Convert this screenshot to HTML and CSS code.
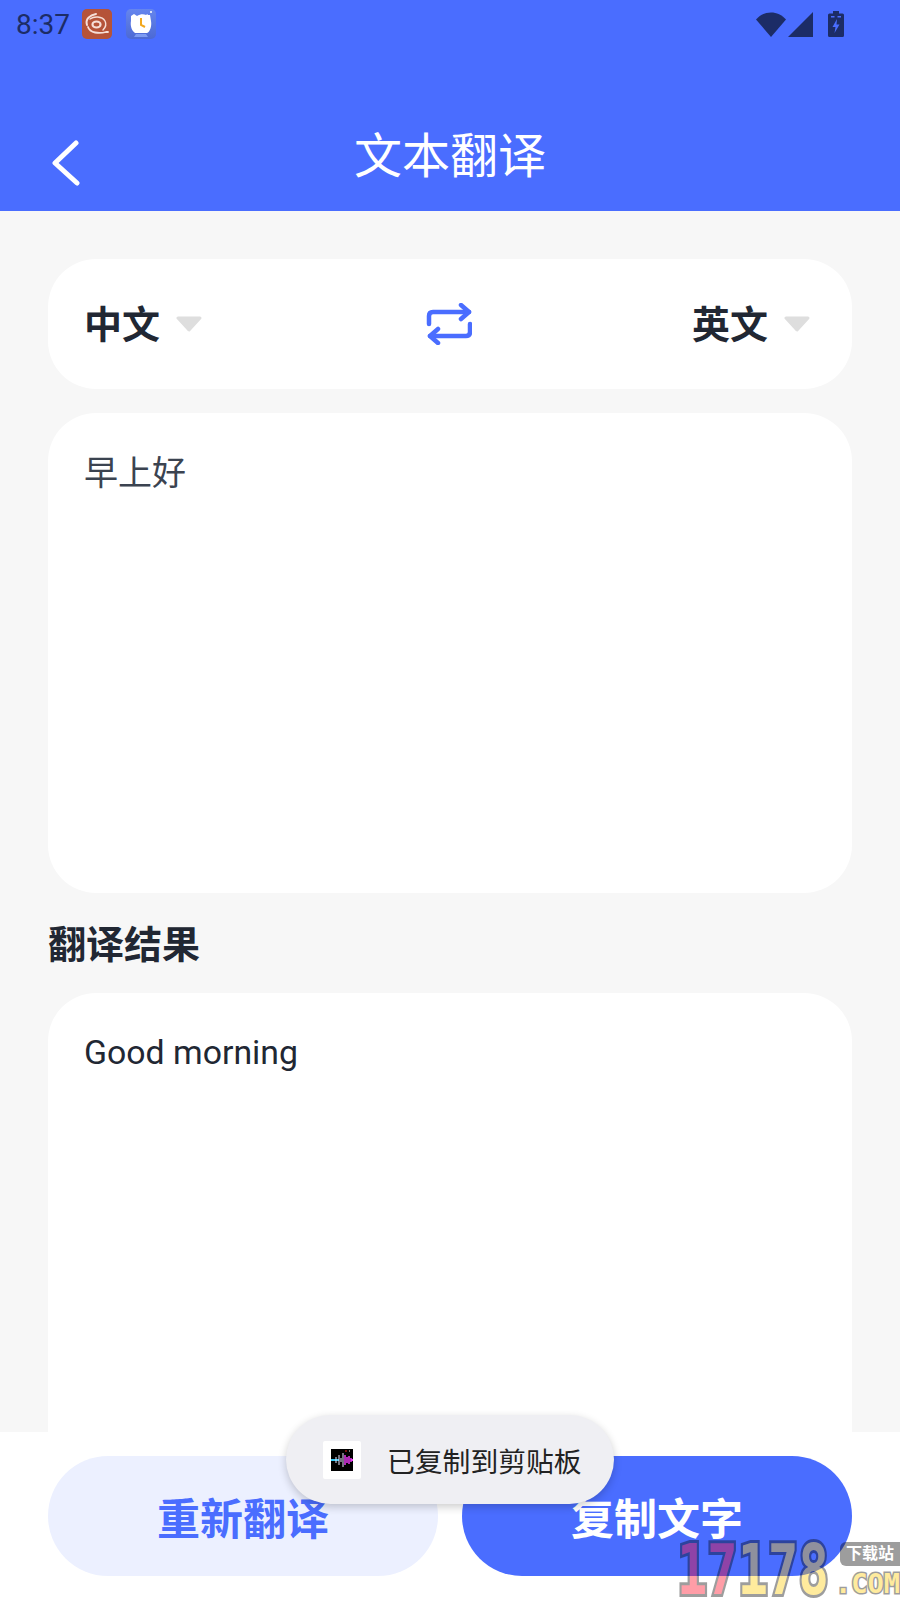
FILE: index.html
```html
<!DOCTYPE html>
<html lang="zh-CN">
  <head>
    <meta charset="UTF-8" />
    <title>文本翻译</title>
    <link rel="stylesheet" href="styles.css">
  </head>
  <body>
    <div class="page">
      <!-- Blue header with status bar -->
      <header class="header">
        <div class="status-bar">
          <span class="time">8:37</span>
          <span class="notice-icon notice-red">
            <svg viewBox="0 0 30 30" width="30" height="30">
              <g fill="none" stroke="#f6dfd8" stroke-linecap="round">
                <ellipse cx="14.500" cy="15.500" rx="4" ry="3" stroke-width="2.200" />
                <path d="M5 16C3 10 8 6 14 5" stroke-width="2" />
                <path d="M8 10C12 7 20 7 23 12C25 16 23 19 21 21" stroke-width="1.400" />
                <path d="M6 18C8 24 17 25 24 23L26 23" stroke-width="1.800" />
              </g>
            </svg>
          </span>
          <span class="notice-icon notice-blue">
            <svg viewBox="0 0 30 30" width="30" height="30">
              <path d="M5 7L8 5L11 7C14 5 18 5 20 6L24 6L25 12C26 17 24 23 21 24H9C6 22 4 17 5 12Z" fill="#fff" />
              <path d="M10 25H20L22 28H8Z" fill="#7d9bf2" />
              <path d="M15 9V16L19 18" fill="none" stroke="#f2a81d" stroke-width="2" />
              <path d="M19 7L22 6M24 3H26" stroke="#fff" stroke-width="1.600" />
            </svg>
          </span>
          <span class="status-right">
            <svg class="wifi" viewBox="0 0 30 25" width="30" height="25">
              <path d="M0 7.500C8 -2 22 -2 30 7.500L15 25Z" fill="#1c2c66" />
            </svg>
            <svg class="signal" viewBox="0 0 25 25" width="25" height="25">
              <path d="M25 0V25H0Z" fill="#1c2c66" />
            </svg>
            <svg class="battery" viewBox="0 0 16 26" width="16" height="26">
              <path d="M5 0H11V2.500H14.500Q16 2.500 16 4V24.500Q16 26 14.500 26H1.500Q0 26 0 24.500V4Q0 2.500 1.500 2.500H5Z" fill="#1c2c66" />
              <path d="M3 5H6.500V6.500H3ZM9.500 5H13V6.500H9.500Z" fill="#4a6dff" />
              <path d="M9 8L4.500 16H7.500L6.500 22L11.500 13.500H8.500Z" fill="#4a6dff" />
            </svg>
          </span>
        </div>
        <div class="title-bar">
          <svg class="back" viewBox="0 0 30 46" width="30" height="46">
            <path d="M25 3L4 23L26 43" fill="none" stroke="#fff" stroke-width="5" stroke-linecap="round" stroke-linejoin="round" />
          </svg>
          <h1>文本翻译</h1>
        </div>
      </header>

      <main class="content">
        <!-- Language picker -->
        <div class="lang-card">
          <div class="lang">
            <span>中文</span>
            <svg class="caret" viewBox="0 0 26 16" width="26" height="16">
              <path d="M2 2H24L13 14Z" fill="#dedede" stroke="#dedede" stroke-width="3" stroke-linejoin="round" />
            </svg>
          </div>
          <svg class="swap" viewBox="0 0 46 42" width="46" height="42">
            <g fill="none" stroke="#4a6dff" stroke-width="4.500" stroke-linecap="round" stroke-linejoin="round">
              <path d="M3 21V13Q3 9 7 9H43" />
              <path d="M35 2L43 9L35 16" />
              <path d="M44 21V29Q44 33 40 33H4" />
              <path d="M12 26L4 33L12 40" />
            </g>
          </svg>
          <div class="lang lang-right">
            <span>英文</span>
            <svg class="caret" viewBox="0 0 26 16" width="26" height="16">
              <path d="M2 2H24L13 14Z" fill="#dedede" stroke="#dedede" stroke-width="3" stroke-linejoin="round" />
            </svg>
          </div>
        </div>

        <div class="text-card source-card">
          <p class="source-text">早上好</p>
        </div>

        <h2>翻译结果</h2>

        <div class="text-card result-card">
          <p class="result-text">Good morning</p>
        </div>
      </main>

      <footer class="footer">
        <button class="btn btn-light">重新翻译</button>
        <button class="btn btn-primary">复制文字</button>
      </footer>

      <!-- Toast -->
      <div class="toast">
        <span class="toast-icon">
          <svg viewBox="0 0 22 22" width="22" height="22">
            <rect width="22" height="22" fill="#000" />
            <path d="M0 11H8" stroke="#35c8f5" stroke-width="2" />
            <path d="M5 8V14M8 6V16M10 9V13M12 4V18" stroke="#e8e4ff" stroke-width="1" />
            <path d="M14 6V16M16 8V14M18 7V15M20 9V13M21.500 10V12" stroke="#e638f0" stroke-width="1.500" />
            <path d="M14 2H16" stroke="#e02020" stroke-width="1" />
            <path d="M18 2H19" stroke="#fff" stroke-width="1" />
          </svg>
        </span>
        <span class="toast-text">已复制到剪贴板</span>
      </div>

      <!-- Watermark -->
      <div class="watermark">
        <span class="wm-num"><b class="wm-pink">17</b><b class="wm-yellow">178</b></span>
        <span class="wm-side">
          <span class="wm-tag">下载站</span>
          <span class="wm-com">.COM</span>
        </span>
      </div>
    </div>
  </body>
</html>
```

FILE: styles.css
```css
* {
  margin: 0;
  padding: 0;
  box-sizing: border-box;
}
body {
  background-color: #f7f7f7;
  color: #212733;
  font-family: Roboto, "Noto Sans CJK SC", sans-serif;
}
.page {
  position: relative;
  display: flex;
  flex-direction: column;
  width: 900px;
  height: 1600px;
  overflow: hidden;
}

/* Header */
.header {
  height: 211px;
  background-color: #4a6dff;
  flex-shrink: 0;
}
.status-bar {
  display: flex;
  align-items: center;
  height: 48px;
  padding-left: 16px;
}
.time {
  font-size: 28px;
  color: #1c2c66;
  width: 66px;
}
.notice-icon {
  display: block;
  width: 30px;
  height: 30px;
  border-radius: 5px;
  margin-right: 14px;
}
.notice-red {
  background-color: #b55339;
}
.notice-blue {
  background: linear-gradient(#6585ee, #4c69d4);
}
.status-right {
  display: flex;
  align-items: center;
  margin-left: auto;
  margin-right: 56px;
}
.wifi {
  margin-right: 2px;
}
.signal {
  margin-right: 15px;
}
.title-bar {
  position: relative;
  display: flex;
  justify-content: center;
  align-items: center;
  height: 118px;
  margin-top: 45px;
}
.title-bar h1 {
  font-size: 48px;
  font-weight: 400;
  color: #fff;
}
.back {
  position: absolute;
  left: 51px;
  top: 47px;
}

/* Content */
.content {
  flex: 1;
  min-height: 0;
  overflow: hidden;
  padding: 48px 48px 0;
}
.lang-card {
  display: grid;
  grid-template-columns: 1fr auto 1fr;
  align-items: center;
  height: 130px;
  padding: 0 42px 0 36px;
  background-color: #fff;
  border-radius: 48px;
  margin-bottom: 24px;
}
.lang {
  display: flex;
  align-items: center;
  gap: 16px;
  font-size: 38px;
  font-weight: 700;
}
.lang span {
  margin-bottom: 6px;
}
.lang-right {
  justify-content: flex-end;
}
.swap {
  position: relative;
  left: 2px;
}
.text-card {
  background-color: #fff;
  border-radius: 48px;
  padding: 0 36px;
}
.source-card {
  height: 480px;
  padding-top: 33px;
}
.source-text {
  font-size: 34px;
  color: #3b4350;
}
.result-card {
  height: 520px;
  padding-top: 40px;
}
.result-text {
  font-size: 33.800px;
}
h2 {
  font-size: 38px;
  font-weight: 700;
  line-height: 52px;
  margin: 26px 0 22px;
}

/* Footer */
.footer {
  display: flex;
  gap: 24px;
  height: 168px;
  padding: 24px 48px;
  background-color: #fff;
  flex-shrink: 0;
}
.btn {
  flex: 1;
  height: 120px;
  border: none;
  border-radius: 60px;
  font-family: inherit;
  font-size: 43px;
  font-weight: 700;
}
.btn-light {
  background-color: #ecf0ff;
  color: #4a6dff;
}
.btn-primary {
  background-color: #4a6dff;
  color: #fff;
}

/* Toast */
.toast {
  position: absolute;
  left: 286px;
  top: 1415px;
  display: flex;
  align-items: center;
  width: 328px;
  height: 89px;
  padding-left: 37px;
  background-color: #efeff3;
  border-radius: 45px;
  box-shadow: 0 3px 8px rgba(0, 0, 0, 0.2);
}
.toast-icon {
  display: flex;
  justify-content: center;
  align-items: center;
  width: 38px;
  height: 38px;
  background-color: #fff;
  border-radius: 2px;
  margin-right: 26px;
}
.toast-text {
  font-size: 27.800px;
  color: #222;
  white-space: nowrap;
}

/* Watermark */
.watermark {
  position: absolute;
  left: 677px;
  top: 1540px;
  display: flex;
  width: 223px;
  height: 60px;
  opacity: 0.38;
}
.wm-num {
  display: block;
  width: 158px;
  height: 60px;
  flex-shrink: 0;
  font-family: "DejaVu Sans Mono", monospace;
  font-size: 70px;
  line-height: 60px;
  white-space: nowrap;
  -webkit-text-stroke: 6px #000;
  paint-order: stroke fill;
  transform: scaleX(0.72);
  transform-origin: 0 50%;
}
.wm-num b {
  font-weight: 700;
}
.wm-pink {
  color: #ff001a;
}
.wm-yellow {
  color: #ffcb00;
}
.wm-side {
  display: flex;
  flex-direction: column;
  align-items: flex-end;
  flex: 1;
}
.wm-tag {
  width: 60px;
  height: 24px;
  margin-top: 2px;
  background-color: #000;
  color: #fff;
  font-size: 16px;
  font-weight: 700;
  line-height: 24px;
  text-align: center;
  border-radius: 6px 0 0 6px;
}
.wm-com {
  font-family: "DejaVu Sans Mono", monospace;
  font-size: 27px;
  font-weight: 700;
  line-height: 30px;
  margin-top: 3px;
  color: #ffcb00;
  -webkit-text-stroke: 3px #000;
  paint-order: stroke fill;
}
```
